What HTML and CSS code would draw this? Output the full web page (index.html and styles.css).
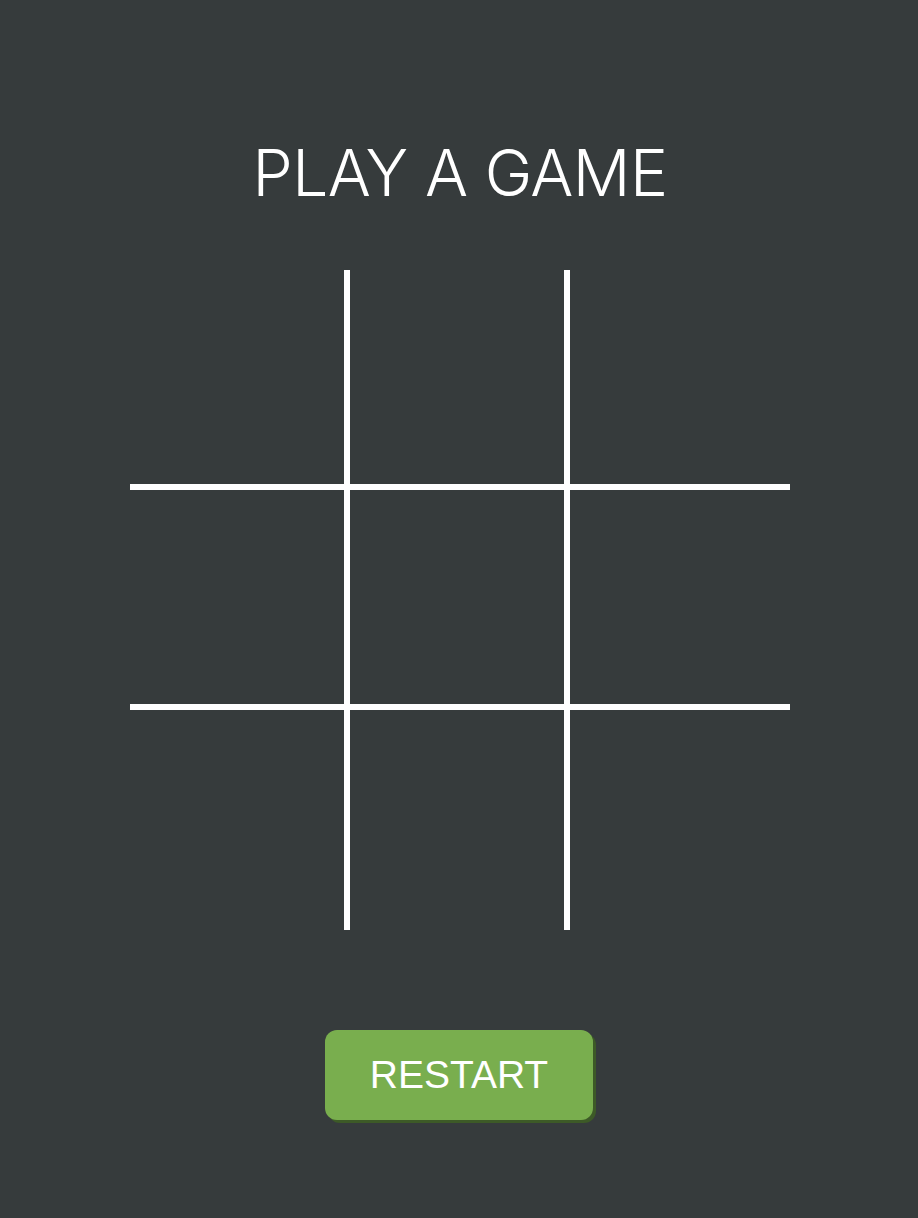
FILE: index.html
```html
<!DOCTYPE html>
<html lang="en">
<head>
<meta charset="utf-8">
<title>Tic Tac Toe</title>
<link rel="stylesheet" href="styles.css">
</head>
<body>
<main class="game">
  <h1 class="title">PLAY A GAME</h1>
  <div class="board">
    <div class="cell cell-r cell-b"></div>
    <div class="cell cell-r cell-b"></div>
    <div class="cell cell-b"></div>
    <div class="cell cell-r cell-b"></div>
    <div class="cell cell-r cell-b"></div>
    <div class="cell cell-b"></div>
    <div class="cell cell-r"></div>
    <div class="cell cell-r"></div>
    <div class="cell"></div>
  </div>
  <button class="restart" type="button">RESTART</button>
</main>
</body>
</html>
```
FILE: styles.css
```css
html, body {
  margin: 0;
  padding: 0;
  background: #363b3c;
  min-height: 100%;
}
body {
  height: 1218px;
}
.game {
  display: flex;
  flex-direction: column;
  align-items: center;
  padding-top: 133px;
}
.title {
  margin: 0 0 0 2px;
  font-family: "Inter", "Liberation Sans", sans-serif;
  font-weight: 300;
  font-size: 64px;
  line-height: 80px;
  color: #ffffff;
  letter-spacing: -0.6px;
}
.board {
  margin-top: 57px;
  margin-left: 2px;
  width: 660px;
  height: 660px;
  display: grid;
  grid-template-columns: repeat(3, 220px);
  grid-template-rows: repeat(3, 220px);
}
.cell {
  box-sizing: border-box;
}
.cell-r {
  border-right: 6px solid #ffffff;
}
.cell-b {
  border-bottom: 6px solid #ffffff;
}
.restart {
  margin-top: 100px;
  width: 268px;
  height: 90px;
  border: 0;
  border-radius: 12px;
  background: #79ae4e;
  box-shadow: 3px 3px 0 #3d5a27;
  color: #ffffff;
  font-family: "Liberation Sans", Arial, sans-serif;
  font-size: 39px;
  line-height: 44px;
  padding: 0;
  cursor: pointer;
}
```
